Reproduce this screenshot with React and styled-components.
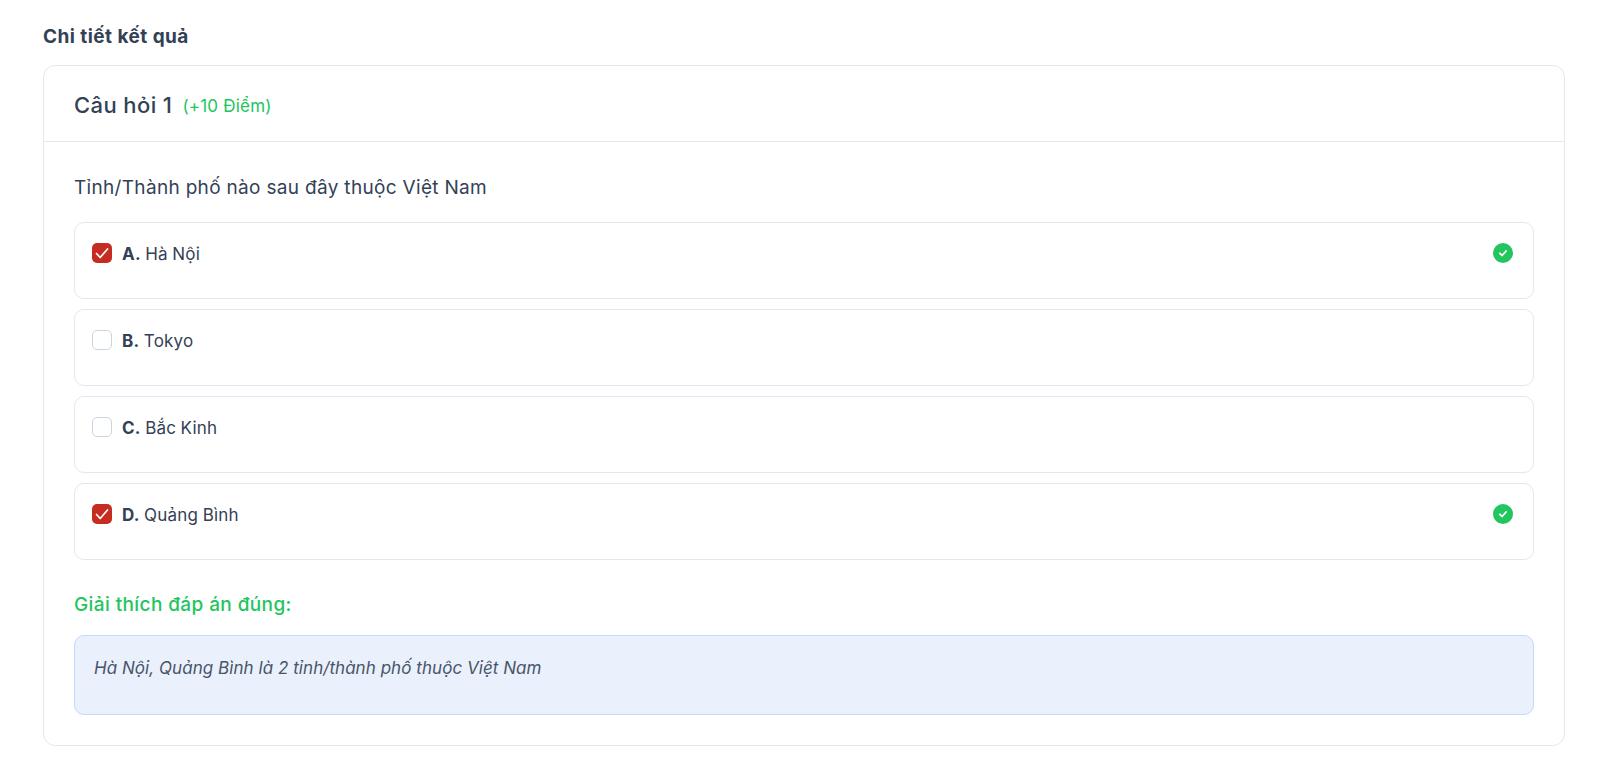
import React from "react";
import styled, { createGlobalStyle } from "styled-components";

const GlobalStyle = createGlobalStyle`
  html, body {
    margin: 0;
    background: #fff;
    font-family: "Inter", "Noto Sans", sans-serif;
    color: #334155;
  }
`;

const Page = styled.div`
  padding: 24px 35px 16px 43px;
`;

const Heading = styled.h2`
  margin: 0 0 16px;
  font-size: 19px;
  line-height: 25px;
  letter-spacing: 0.45px;
  font-weight: 700;
  color: #334155;
`;

const Card = styled.section`
  border: 1px solid #e2e8f0;
  border-radius: 12px;
  background: #fff;
`;

const CardHeader = styled.header`
  display: flex;
  align-items: center;
  gap: 10px;
  height: 73px;
  padding: 2px 30px 0;
  border-bottom: 1px solid #e2e8f0;
`;

const QuestionNo = styled.span`
  font-size: 22px;
  letter-spacing: 0.4px;
  font-weight: 500;
  color: #334155;
`;

const Points = styled.span`
  margin-top: 2px;
  font-size: 17px;
  letter-spacing: 0.2px;
  color: #22c55e;
`;

const CardBody = styled.div`
  padding: 30px;
`;

const Question = styled.p`
  margin: 0 0 18px;
  font-size: 19px;
  line-height: 32px;
  letter-spacing: 0.32px;
  color: #334155;
`;

const Options = styled.div`
  display: flex;
  flex-direction: column;
  gap: 10px;
`;

const Option = styled.div`
  display: flex;
  align-items: flex-start;
  gap: 10px;
  height: 77px;
  box-sizing: border-box;
  padding: 20px 20.5px 0 17px;
  border: 1px solid #e2e8f0;
  border-radius: 10px;
`;

const Box = styled.span`
  flex: none;
  display: flex;
  align-items: center;
  justify-content: center;
  width: 20px;
  height: 20px;
  box-sizing: border-box;
  border-radius: 5px;
  border: ${(p) => (p.$checked ? "none" : "1px solid #cbd5e1")};
  background: ${(p) => (p.$checked ? "#c62d22" : "#fff")};
`;

const Label = styled.span`
  flex: 1;
  font-size: 17px;
  line-height: 22px;
  letter-spacing: 0.2px;
  word-spacing: -0.5px;
  color: #334155;

  b {
    font-weight: 700;
  }
`;

const Explain = styled.h3`
  margin: 31px 0 16px;
  font-size: 19px;
  line-height: 28px;
  letter-spacing: 0.4px;
  font-weight: 500;
  color: #22c55e;
`;

const Note = styled.div`
  height: 80px;
  box-sizing: border-box;
  padding: 20px 19px;
  border: 1px solid #bfdbfe;
  border-radius: 10px;
  background: #eaf0fc;
  font-size: 17px;
  line-height: 24px;
  letter-spacing: 0.05px;
  font-style: italic;
  color: #475569;
`;

const Check = () => (
  <svg width="16" height="16" viewBox="0 0 16 16" fill="none">
    <path d="M2.5 8.5 6.2 12.5 13.5 4" stroke="#fff" strokeWidth="1.7" strokeLinecap="round" strokeLinejoin="round" />
  </svg>
);

const Correct = () => (
  <svg width="20" height="20" viewBox="0 0 20 20" style={{ flex: "none" }}>
    <circle cx="10" cy="10" r="10" fill="#22c55e" />
    <path d="M6.9 10.3 9 12.5 13.1 8" fill="none" stroke="#fff" strokeWidth="1.8" strokeLinecap="round" strokeLinejoin="round" />
  </svg>
);

const options = [
  { key: "A.", text: "Hà Nội", checked: true },
  { key: "B.", text: "Tokyo" },
  { key: "C.", text: "Bắc Kinh" },
  { key: "D.", text: "Quảng Bình", checked: true },
];

export default function App() {
  return (
    <Page>
      <GlobalStyle />
      <Heading>Chi tiết kết quả</Heading>
      <Card>
        <CardHeader>
          <QuestionNo>Câu hỏi 1</QuestionNo>
          <Points>(+10 Điểm)</Points>
        </CardHeader>
        <CardBody>
          <Question>Tỉnh/Thành phố nào sau đây thuộc Việt Nam</Question>
          <Options>
            {options.map((o) => (
              <Option key={o.key}>
                <Box $checked={o.checked}>{o.checked && <Check />}</Box>
                <Label>
                  <b>{o.key}</b> {o.text}
                </Label>
                {o.checked && <Correct />}
              </Option>
            ))}
          </Options>
          <Explain>Giải thích đáp án đúng:</Explain>
          <Note>Hà Nội, Quảng Bình là 2 tỉnh/thành phố thuộc Việt Nam</Note>
        </CardBody>
      </Card>
    </Page>
  );
}
